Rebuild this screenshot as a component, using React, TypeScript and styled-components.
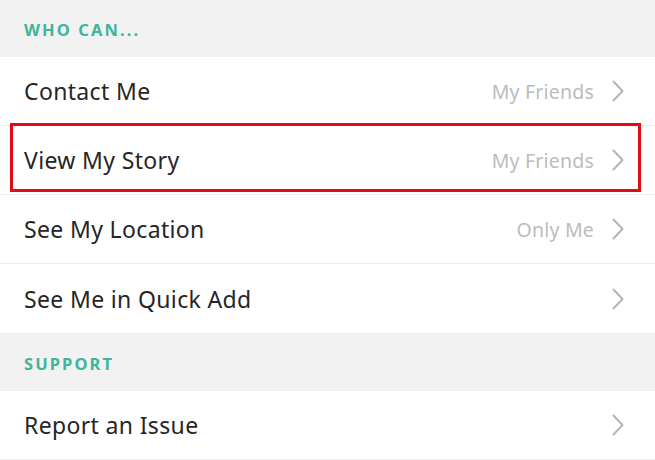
import React from "react";
import styled, { createGlobalStyle } from "styled-components";

const Global = createGlobalStyle`
  html, body { margin: 0; padding: 0; background: #ffffff; }
  body { font-family: "Noto Sans", "Liberation Sans", sans-serif; }
`;

const Page = styled.div`
  width: 655px;
  height: 460px;
  overflow: hidden;
  background: #ffffff;
  display: flex;
  flex-direction: column;
`;

const SectionHeader = styled.div`
  height: 57px;
  flex: none;
  background: #f2f2f2;
  display: flex;
  align-items: center;
  padding-left: 24px;
  padding-top: 2px;
  box-sizing: border-box;
  color: #3fb59b;
  font-family: "Noto Sans", sans-serif;
  font-weight: 700;
  font-size: 16.5px;
  letter-spacing: 2.1px;
`;

const Row = styled.div<{ $highlighted?: boolean; $h?: number }>`
  position: relative;
  height: ${(p) => p.$h ?? 69}px;
  flex: none;
  box-sizing: border-box;
  border-bottom: 1px solid #ededed;
  display: flex;
  align-items: center;
  padding: 0 31px 0 24px;
  gap: 18px;
  &::after {
    content: "";
    display: ${(p) => (p.$highlighted ? "block" : "none")};
    position: absolute;
    left: 10px;
    right: 14px;
    top: -3px;
    bottom: 2px;
    border: 3px solid #e10b16;
    pointer-events: none;
  }
`;

const Label = styled.span`
  flex: 1;
  color: #262626;
  font-size: 23px;
  font-weight: 400;
  letter-spacing: 0.35px;
`;

const Value = styled.span`
  color: #bcbcbc;
  font-size: 19.5px;
  font-weight: 400;
  letter-spacing: 0.2px;
`;

const Chevron = () => (
  <svg width="12" height="22" viewBox="0 0 12 22" fill="none">
    <path d="M1.5 1.5 L10.5 11 L1.5 20.5" stroke="#b5b5b5" strokeWidth="2" strokeLinecap="round" strokeLinejoin="round" />
  </svg>
);

const items = [
  { label: "Contact Me", value: "My Friends" },
  { label: "View My Story", value: "My Friends", highlighted: true },
  { label: "See My Location", value: "Only Me" },
  { label: "See Me in Quick Add", value: "" },
];

export default function App() {
  return (
    <Page>
      <Global />
      <SectionHeader>WHO CAN...</SectionHeader>
      {items.map((it) => (
        <Row key={it.label} $highlighted={it.highlighted} $h={it.label === "See Me in Quick Add" ? 70 : 69}>
          <Label>{it.label}</Label>
          {it.value && <Value>{it.value}</Value>}
          <Chevron />
        </Row>
      ))}
      <SectionHeader>SUPPORT</SectionHeader>
      <Row $h={69}>
        <Label>Report an Issue</Label>
        <Chevron />
      </Row>
    </Page>
  );
}
